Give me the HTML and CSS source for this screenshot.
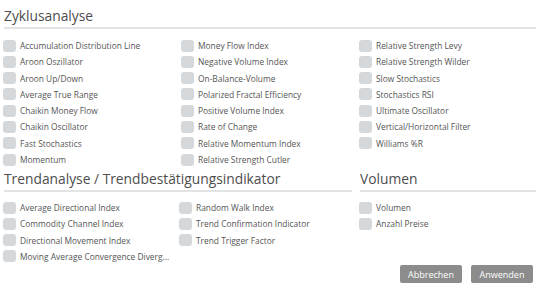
FILE: index.html
```html
<!DOCTYPE html>
<html lang="de">
<head>
    <meta charset="UTF-8">
    <meta name="viewport" content="width=device-width, initial-scale=1.0">
    <title>Indikatoren</title>
    <link rel="stylesheet" href="styles.css">
</head>
<body>

<div class="dialog">
    <div class="section">
        <h2 class="section-title">Zyklusanalyse</h2>
        <div class="options cols-3">
            <div class="option"><span class="box"></span>Accumulation Distribution Line</div>
            <div class="option"><span class="box"></span>Money Flow Index</div>
            <div class="option"><span class="box"></span>Relative Strength Levy</div>
            <div class="option"><span class="box"></span>Aroon Oszillator</div>
            <div class="option"><span class="box"></span>Negative Volume Index</div>
            <div class="option"><span class="box"></span>Relative Strength Wilder</div>
            <div class="option"><span class="box"></span>Aroon Up/Down</div>
            <div class="option"><span class="box"></span>On-Balance-Volume</div>
            <div class="option"><span class="box"></span>Slow Stochastics</div>
            <div class="option"><span class="box"></span>Average True Range</div>
            <div class="option"><span class="box"></span>Polarized Fractal Efficiency</div>
            <div class="option"><span class="box"></span>Stochastics RSI</div>
            <div class="option"><span class="box"></span>Chaikin Money Flow</div>
            <div class="option"><span class="box"></span>Positive Volume Index</div>
            <div class="option"><span class="box"></span>Ultimate Oscillator</div>
            <div class="option"><span class="box"></span>Chaikin Oscillator</div>
            <div class="option"><span class="box"></span>Rate of Change</div>
            <div class="option"><span class="box"></span>Vertical/Horizontal Filter</div>
            <div class="option"><span class="box"></span>Fast Stochastics</div>
            <div class="option"><span class="box"></span>Relative Momentum Index</div>
            <div class="option"><span class="box"></span>Williams %R</div>
            <div class="option"><span class="box"></span>Momentum</div>
            <div class="option"><span class="box"></span>Relative Strength Cutler</div>
        </div>
    </div>

    <div class="split">
        <div class="section trend">
            <h2 class="section-title">Trendanalyse / Trendbestätigungsindikator</h2>
            <div class="options cols-2">
                <div class="option"><span class="box"></span>Average Directional Index</div>
                <div class="option"><span class="box"></span>Random Walk Index</div>
                <div class="option"><span class="box"></span>Commodity Channel Index</div>
                <div class="option"><span class="box"></span>Trend Confirmation Indicator</div>
                <div class="option"><span class="box"></span>Directional Movement Index</div>
                <div class="option"><span class="box"></span>Trend Trigger Factor</div>
                <div class="option"><span class="box"></span>Moving Average Convergence Diverg...</div>
            </div>
        </div>
        <div class="section volume">
            <h2 class="section-title">Volumen</h2>
            <div class="options">
                <div class="option"><span class="box"></span>Volumen</div>
                <div class="option"><span class="box"></span>Anzahl Preise</div>
            </div>
        </div>
    </div>

    <div class="actions">
        <button class="btn">Abbrechen</button>
        <button class="btn">Anwenden</button>
    </div>
</div>

</body>
</html>
```

FILE: styles.css
```css
body {
    margin: 0;
    background: #fff;
    font-family: 'Open Sans', 'Noto Sans', sans-serif;
    color: #555;
}
.dialog {
    width: 540px;
    height: 287px;
    padding: 0 4px 0 3px;
    box-sizing: border-box;
    display: flex;
    flex-direction: column;
}
.section-title {
    margin: 0 0 0 1px;
    padding: 8px 0 3px;
    font-size: 13.8px;
    font-weight: 400;
    line-height: 16px;
    color: #4d4d4d;
    border-bottom: 2px solid #e2e4e6;
}
.options {
    display: grid;
    grid-auto-rows: 13px;
    row-gap: 3.3px;
    margin-top: 10px;
}
.cols-3 {
    grid-template-columns: 178px 178px 1fr;
}
.cols-2 {
    grid-template-columns: 176px 1fr;
}
.option {
    display: flex;
    align-items: center;
    font-size: 8.4px;
    white-space: nowrap;
    color: #555;
}
.box {
    width: 13px;
    height: 12px;
    margin-right: 4px;
    border-radius: 3px;
    background: #d5d8db;
    flex: none;
}
.split {
    display: flex;
    gap: 7px;
}
.split .section-title {
    padding-top: 5px;
}
.split .options {
    margin-top: 9px;
}
.trend {
    width: 349px;
}
.volume {
    flex: 1;
}
.actions {
    margin-top: auto;
    margin-bottom: 4px;
    display: flex;
    justify-content: flex-end;
    gap: 9px;
    padding-right: 3px;
}
.btn {
    width: 62px;
    height: 18px;
    border: none;
    border-radius: 2px;
    background: #8c8c8c;
    color: #fff;
    font-family: 'Open Sans', sans-serif;
    font-size: 9px;
    padding: 0;
}
```
